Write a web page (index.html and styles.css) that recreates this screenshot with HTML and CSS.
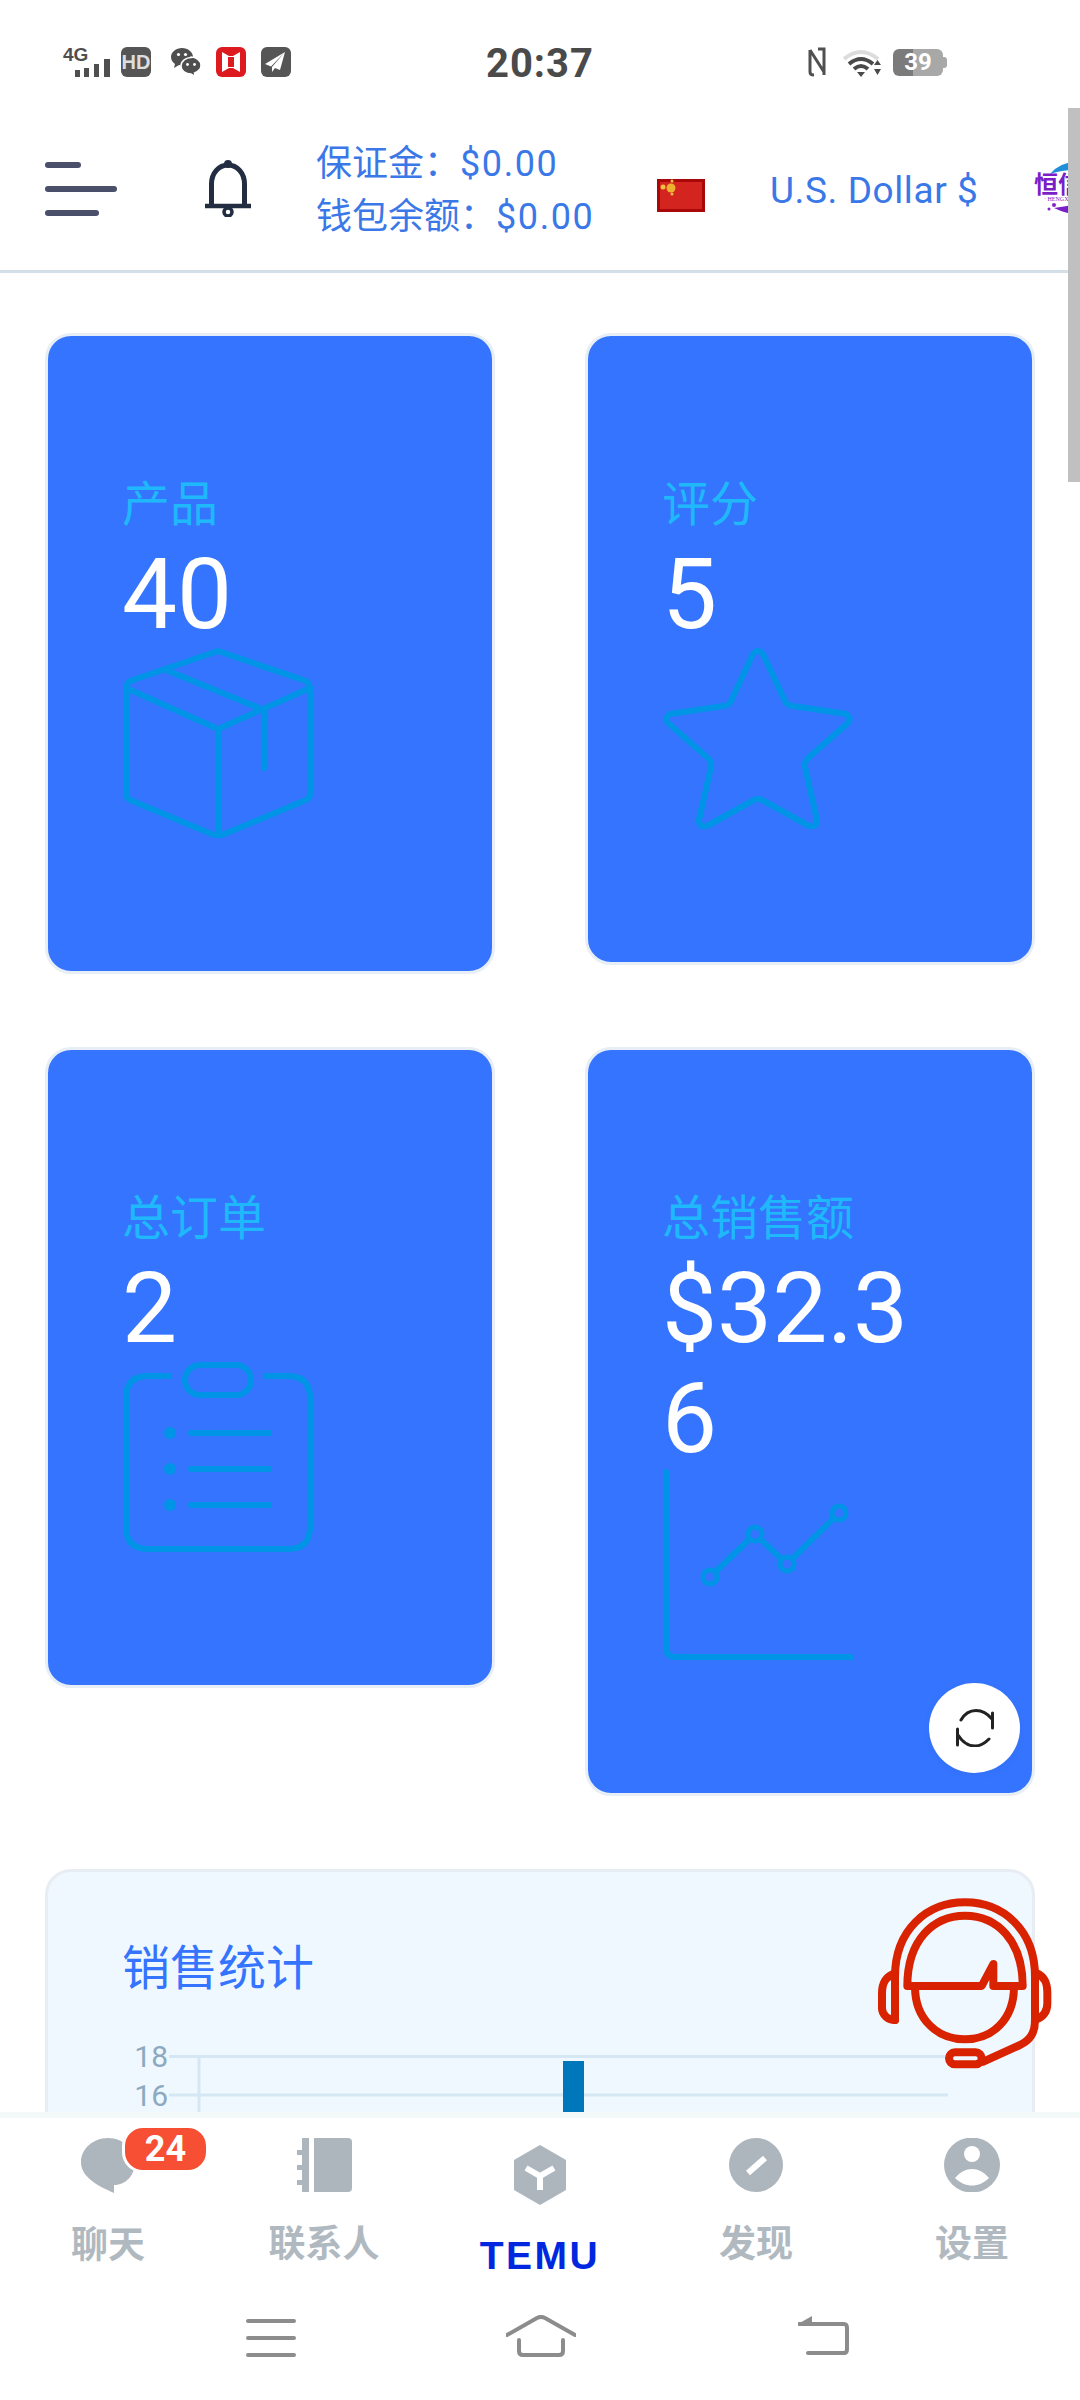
FILE: index.html
```html
<!DOCTYPE html>
<html lang="zh">
<head>
<meta charset="utf-8">
<title>TEMU</title>
<link rel="stylesheet" href="styles.css">
</head>
<body>

<!-- status bar -->
<div class="status">
	<div class="st-left">
		<div class="net">
			<span class="net-g">4G</span>
			<svg class="net-bars" width="35" height="18" viewBox="0 0 35 18"><path d="M0 11h5v7H0zM9 9h5v9H9zM19 5h5v13h-5zM29 0h6v18h-6z" fill="#4f4f4f"/></svg>
		</div>
		<span class="hd">HD</span>
		<svg class="st-ico" width="30" height="30" viewBox="0 0 30 30">
			<path d="M11 1C5 1 0 5 0 10c0 3 1.500 5 4 7l-1 4 5-3c1 .3 2 .4 3 .4C17 18.400 22 14.500 22 10 22 5 17 1 11 1z" fill="#4f4f4f"/>
			<path d="M20 10.500c-5 0-10 3.500-10 8.500s5 8 10 8l4 2.500-.5-3.500c3.500-1.500 6.500-4 6.500-7.500 0-5-5-8.500-10-8.500z" fill="#4f4f4f" stroke="#fff" stroke-width="1.500"/>
			<circle cx="7.500" cy="7.500" r="1.600" fill="#fff"/><circle cx="14.500" cy="7.500" r="1.600" fill="#fff"/>
			<circle cx="16.500" cy="17.500" r="1.400" fill="#fff"/><circle cx="23.500" cy="17.500" r="1.400" fill="#fff"/>
		</svg>
		<svg class="st-ico" width="30" height="30" viewBox="0 0 30 30">
			<rect width="30" height="30" rx="6" fill="#dd1a20"/>
			<path d="M6 5l7 4h4l7-4v20l-7-4h-4l-7 4z" fill="#fff"/><rect x="12" y="10" width="6" height="10" fill="#dd1a20"/>
		</svg>
		<svg class="st-ico" width="30" height="30" viewBox="0 0 30 30">
			<rect width="30" height="30" rx="6" fill="#555"/>
			<path d="M24 5L4 17l6 2.500z M24 5L11 20v5l3-4 5 2z" fill="#fff"/>
		</svg>
	</div>
	<div class="time">20:37</div>
	<div class="st-right">
		<svg class="nfc" width="18" height="30" viewBox="0 0 18 30"><path d="M2 3v22q0 3 4 3M2 3l14 22M10 2h6v26" fill="none" stroke="#505050" stroke-width="3"/></svg>
		<svg class="wifi" width="39" height="28" viewBox="0 0 39 28">
			<path d="M1 10Q18-4 35 10" fill="none" stroke="#dcdcdc" stroke-width="4"/>
			<path d="M6 15Q18 5 30 15M11 20Q18 14 25 20" fill="none" stroke="#4a4a4a" stroke-width="4"/>
			<path d="M14 23h8l-4 5zM31 16h7l-3.500-5zM31 20h7l-3.500 6z" fill="#4a4a4a"/>
		</svg>
		<div class="batt"><span class="batt-n">39</span></div>
	</div>
</div>

<!-- header -->
<div class="head">
	<div class="burger"><i class="b1"></i><i class="b2"></i><i class="b3"></i></div>
	<svg class="bell" width="46" height="58" viewBox="0 0 46 58" fill="none" stroke="#232d42">
		<path d="M6.500 47V25C6.500 14 14 6 23 6s16.500 8 16.500 19v22" stroke-width="5"/>
		<path d="M0 47h46" stroke-width="4.500"/>
		<circle cx="23" cy="5" r="4" fill="#232d42" stroke="none"/>
		<circle cx="23" cy="53" r="4" stroke-width="3.500"/>
	</svg>
	<div class="wallet">
		<div>保证金：<span class="latin">$0.00</span></div>
		<div>钱包余额：<span class="latin">$0.00</span></div>
	</div>
	<svg class="flag" width="48" height="33" viewBox="0 0 48 33">
		<rect width="48" height="33" fill="#a80808"/><rect x="3" y="3" width="42" height="27" fill="#d42420"/>
		<circle cx="14" cy="9" r="4.500" fill="#eeb030"/><circle cx="6" cy="8" r="2.500" fill="#f0c040"/><circle cx="15" cy="2" r="1.500" fill="#f0c040"/><circle cx="15" cy="15" r="1.500" fill="#f0c040"/>
	</svg>
	<div class="usd">U.S. Dollar $</div>
	<svg class="logo" width="62" height="56" viewBox="0 0 62 56">
		<path d="M16 12Q30-4 52 2L62 0V12Q40 4 16 12z" fill="#1f8fd8"/>
		<path d="M40 0h22v14Q50 4 40 0z" fill="#7a1fc8"/>
		<path d="M20 46q20 10 42 4V36Q40 44 20 46z" fill="#7a1fc8"/>
		<circle cx="20" cy="43" r="2" fill="#8a1fc8"/><circle cx="15" cy="47" r="1.500" fill="#8a1fc8"/>
		<text class="logo-t" x="0" y="31">恒信<tspan class="logo-b">商</tspan></text>
		<text class="logo-s" x="10" y="39">· HENGXINSHANG</text>
	</svg>
</div>
<div class="scroll"></div>

<div class="main">
	<div class="cards">

		<div class="card">
			<div class="lab">产品</div>
			<div class="num">40</div>
			<svg class="ico" width="190" height="190" viewBox="0 0 190 190">
				<path d="M95 3L183 33Q187 36 187 42V146Q187 150 183 152L99 187Q95 189 91 187L7 152Q3 150 3 146V42Q3 36 7 33z"/>
				<path d="M3 40L95 81 187 40M95 81V187M43 22L141 62V120"/>
			</svg>
		</div>

		<div class="card">
			<div class="lab">评分</div>
			<div class="num">5</div>
			<svg class="ico" width="190" height="181" viewBox="0 0 190 181">
				<path d="M90 6Q95 0 100 6L122 53Q124 58 130 58L183 66Q189 70 185 75L145 110Q141 114 142 119L154 172Q154 180 146 178L99 152Q95 150 91 152L44 178Q36 180 36 172L48 119Q49 114 45 110L5 75Q1 70 7 66L60 58Q66 58 68 53z"/>
			</svg>
		</div>

		<div class="card">
			<div class="lab">总订单</div>
			<div class="num">2</div>
			<svg class="ico" width="190" height="190" viewBox="0 0 190 190">
				<rect x="62" y="3" width="66" height="30" rx="15"/>
				<path d="M46 14H25Q3 14 3 36V165Q3 187 25 187H165Q187 187 187 165V36Q187 14 165 14H143"/>
				<path d="M68 71H146M68 107H146M68 143H146"/>
				<ellipse class="dot" cx="47" cy="71" rx="6" ry="6"/><ellipse class="dot" cx="47" cy="107" rx="6" ry="6"/><ellipse class="dot" cx="47" cy="143" rx="6" ry="6"/>
			</svg>
		</div>

		<div class="card card-last">
			<div class="lab">总销售额</div>
			<div class="num">$32.36</div>
			<svg class="ico ico-chart" width="190" height="191" viewBox="0 0 190 191">
				<path d="M3 3V178Q3 188 13 188H190"/>
				<path d="M47 108L92 65 124 95 176 44"/>
				<circle class="node" cx="47" cy="108" r="7"/><circle class="node" cx="92" cy="65" r="7"/><circle class="node" cx="124" cy="95" r="7"/><circle class="node" cx="176" cy="44" r="7"/>
			</svg>
			<div class="refresh">
				<svg width="38" height="38" viewBox="0 0 38 38" fill="none" stroke="#222" stroke-width="3" stroke-linecap="round">
					<path d="M5 11C9 4 14 1.500 20 1.500S31 4 36 10M36.500 4v15M33 30c-5 5-9 7-14 7-6 0-12-3-17-11M1.500 20v16"/>
				</svg>
			</div>
		</div>

	</div>

	<div class="panel">
		<div class="panel-t">销售统计</div>
		<svg class="sales" width="830" height="300" viewBox="0 0 830 300">
			<path class="sales-l" d="M44 36.500H823M44 75H823M74 36V300"/>
			<rect class="sales-b" x="438" y="41" width="21" height="259"/>
			<text class="sales-n" x="43" y="47">18</text>
			<text class="sales-n" x="43" y="86">16</text>
		</svg>
	</div>
</div>

<svg class="agent" width="220" height="220" viewBox="0 0 660 660" fill="none" stroke="#d92200" stroke-width="24" stroke-linejoin="round" stroke-linecap="round">
	<path d="M105 420V290C105 150 200 67 315 67S525 150 525 290V420C525 460 510 480 480 495L370 545"/>
	<rect x="267" y="517" width="98" height="36" rx="18"/>
	<path d="M105 280C75 290 66 310 66 340V385C66 405 85 420 105 420M530 280C555 290 562 310 562 340V370C562 395 550 410 530 418"/>
	<path d="M142 318C142 180 220 107 315 107S488 180 488 318H400V252L365 318z"/>
	<path d="M165 320C165 420 235 478 315 478S462 420 462 320"/>
</svg>

<!-- tabs -->
<div class="tabs">
	<div class="tab">
		<svg class="tab-i" width="54" height="55" viewBox="0 0 54 55"><path d="M27 0C12 0 0 11 0 24c0 13 12 22 33 31v-8c12 0 21-10 21-23C54 11 42 0 27 0z"/></svg>
		<span class="badge">24</span>
		<span class="tab-t">聊天</span>
	</div>
	<div class="tab">
		<svg class="tab-i" width="55" height="54" viewBox="0 0 55 54"><path d="M17 0H51Q55 0 55 4V50Q55 54 51 54H17zM5 0H12V54H5V47H0V42H5V32H0V27H5V17H0V12H5z"/></svg>
		<span class="tab-t">联系人</span>
	</div>
	<div class="tab tab-on">
		<svg class="tab-i cube" width="52" height="60" viewBox="0 0 52 60">
			<path d="M26 0L52 15V45L26 60 0 45V15z"/>
			<path class="tab-w" d="M12 23L26 31 40 23M26 31V45"/>
		</svg>
		<span class="tab-t">TEMU</span>
	</div>
	<div class="tab">
		<svg class="tab-i" width="54" height="54" viewBox="0 0 54 54">
			<circle cx="27" cy="27" r="27"/>
			<path class="tab-w" d="M19 35L36 20"/>
		</svg>
		<span class="tab-t">发现</span>
	</div>
	<div class="tab">
		<svg class="tab-i" width="56" height="54" viewBox="0 0 56 54">
			<ellipse cx="28" cy="27" rx="28" ry="27.500"/>
			<circle class="tab-f" cx="28" cy="16" r="8"/>
			<path class="tab-f" d="M11 40C16 34 22 31 28 31S40 34 45 40C40 45 34 47.500 28 47.500S16 45 11 40z"/>
		</svg>
		<span class="tab-t">设置</span>
	</div>
</div>

<!-- android nav -->
<div class="nav">
	<svg class="nav-menu" width="50" height="40" viewBox="0 0 50 40"><path d="M2 2H48M2 19H48M2 36H48"/></svg>
	<svg class="nav-home" width="70" height="42" viewBox="0 0 70 42"><path d="M1 20L31 3Q35 1 39 3L69 20M13 25V36Q13 40 17 40H53Q57 40 57 36V25"/></svg>
	<svg class="nav-back" width="51" height="41" viewBox="0 0 51 41"><path d="M1 9H46Q49 9 49 13V34Q49 38 46 38H10"/><path class="nav-arrow" d="M0 9L14 1V9z"/></svg>
</div>

</body>
</html>
```

FILE: styles.css
```css
* {box-sizing:border-box;}

html, body {margin:0; padding:0;}
body {
	position:relative; display:flex; flex-direction:column;
	width:1080px; height:2400px; overflow:hidden;
	background:#fff; font-family:Roboto, "Noto Sans CJK SC", sans-serif;
}

/* status bar */
.status {
	flex:none; height:100px; padding:45px 0 0;
	display:grid; grid-template-columns:1fr auto 1fr; align-items:start;
}
.st-left {display:flex; align-items:flex-start; padding-left:63px;}
.net {position:relative; width:47px; height:32px;}
.net-g {position:absolute; left:0; top:0; font:bold 19px/19px "Liberation Sans", sans-serif; color:#4f4f4f;}
.net-bars {position:absolute; left:12px; top:14px;}
.hd {
	width:30px; height:30px; margin:2px 0 0 11px; border-radius:6px; background:#555;
	color:#ddd; font:bold 20px/30px "Liberation Sans", sans-serif; text-align:center;
}
.st-ico {margin:2px 0 0 15px;}
.st-ico:nth-of-type(1) {margin-left:20px;}

.time {margin-top:-5px; font:bold 40px/47px Roboto, sans-serif; letter-spacing:1px; color:#4a4a4a;}

.st-right {display:flex; align-items:flex-start; justify-content:flex-end; padding-right:133px;}
.nfc {margin:2px 0 0;}
.wifi {margin:4px 0 0 17px;}
.batt {
	position:relative; width:50px; height:27px; margin:4px 4px 0 11px; border-radius:6px;
	background:linear-gradient(90deg, #7b7b7b 0, #7b7b7b 40%, #a8a8a8 40%);
	text-align:center;
}
.batt:after {content:""; position:absolute; right:-4px; top:8px; width:4px; height:11px; border-radius:0 3px 3px 0; background:#a8a8a8;}
.batt-n {color:#fff; font:bold 24px/27px Roboto, sans-serif;}

/* header */
.head {
	flex:none; height:173px; padding:8px 0 0 45px; overflow:hidden;
	display:flex; align-items:center;
	border-bottom:3px solid #d3dfe8;
}
.burger {width:72px; display:flex; flex-direction:column; gap:18px;}
.burger i {display:block; height:6px; border-radius:3px; background:#4a4f6a;}
.b1 {width:36px;}
.b2 {width:72px;}
.b3 {width:54px;}
.bell {margin:-2px 0 0 88px; flex:none;}
.wallet {margin:4px 0 0 65px; width:277px; flex:none; font-size:36px; line-height:53px; color:#3a78e8; white-space:nowrap;}
.latin {letter-spacing:1.6px;}
.flag {margin:12px 0 0 64px; flex:none;}
.usd {margin:2px 0 0 65px; width:209px; flex:none; font-size:37px; letter-spacing:.6px; color:#3a78e8; white-space:nowrap;}
.logo {margin:2px 0 0 55px; flex:none;}
.logo-t {font:bold 24px "Noto Sans CJK SC", sans-serif; fill:#7a1fc8;}
.logo-b {fill:#1f8fd8;}
.logo-s {font:6px "Liberation Serif", serif; fill:#7a1fc8;}

.scroll {position:absolute; left:1068px; top:108px; width:12px; height:374px; background:#c0c0c0;}

/* cards */
.main {flex:1; min-height:0; overflow:hidden; padding:60px 45px 0;}
.cards {display:grid; grid-template-columns:450px 450px; column-gap:90px; row-gap:73px; align-items:start;}
.card {
	position:relative; padding:139px 82px 133px 74px;
	background:#3574ff; border:3px solid #e8eef5; border-radius:26px;
}
.lab {height:60px; margin-bottom:5px; font-size:48px; line-height:60px; color:#1fb8fa;}
.num {font-size:98px; line-height:110px; color:#fff; word-break:break-all;}
.ico {display:block; margin:-2px 0 0 1px; fill:none; stroke:#0094e6; stroke-width:6; stroke-linejoin:round; stroke-linecap:round;}
.ico-chart {margin-top:-5px;}
.ico .dot {fill:#0094e6; stroke:none;}
.ico .node {fill:#3574ff; stroke-width:5;}

.refresh {
	position:absolute; right:12px; bottom:20px; width:91px; height:90px; border-radius:50%;
	display:flex; align-items:center; justify-content:center;
	background:#fff; box-shadow:0 2px 8px rgba(0,0,0,.04);
}

/* sales panel */
.panel {
	margin-top:73px; height:500px; padding:67px 74px 0;
	background:#eff8fe; border:3px solid #e8edf3; border-radius:26px;
}
.panel-t {height:60px; font-size:48px; line-height:60px; color:#3574ff;}
.sales {display:block; margin:21px 0 0 3px;}
.sales-l {fill:none; stroke:#d4e7f2; stroke-width:3;}
.sales-b {fill:#0077bb;}
.sales-n {font:30px Roboto, sans-serif; fill:#8ca9bf; text-anchor:end;}

.agent {position:absolute; left:860px; top:1880px;}

/* tabs */
.tabs {
	flex:none; height:178px;
	display:grid; grid-template-columns:repeat(5, 216px);
	background:#fff; border-top:6px solid #f3f9f9;
}
.tab {position:relative; display:flex; flex-direction:column; align-items:center; padding-top:20px;}
.tab-i {display:block; fill:#adb5bd;}
.tab-w {fill:none; stroke:#fff; stroke-width:6;}
.tab-f {fill:#fff;}
.tab-t {margin-top:27px; font-size:37px; line-height:52px; font-weight:bold; color:#b1b9c0; white-space:nowrap;}
.tab-on {padding-top:27px;}
.tab-on .tab-t {margin-top:25px; font:bold 39px/52px "Liberation Sans", sans-serif; letter-spacing:2.500px; color:#0027e0;}
.badge {
	position:absolute; left:125px; top:10px; width:81px; height:42px;
	background:#f74f33; border:3px solid #fff; border-radius:21px; box-sizing:content-box;
	margin:-3px; color:#fff; font:bold 36px/42px Roboto, sans-serif; text-align:center;
}

/* android nav */
.nav {flex:none; height:110px; padding:27px 0 0 246px; display:flex; align-items:flex-start;}
.nav svg {fill:none; stroke:#8c8c8c; stroke-width:4; stroke-linecap:round; stroke-linejoin:round;}
.nav-menu {margin-top:2px;}
.nav-home {margin:-2px 0 0 210px;}
.nav-back {margin:-2px 0 0 222px;}
.nav svg .nav-arrow {fill:#8c8c8c; stroke:none;}
```
